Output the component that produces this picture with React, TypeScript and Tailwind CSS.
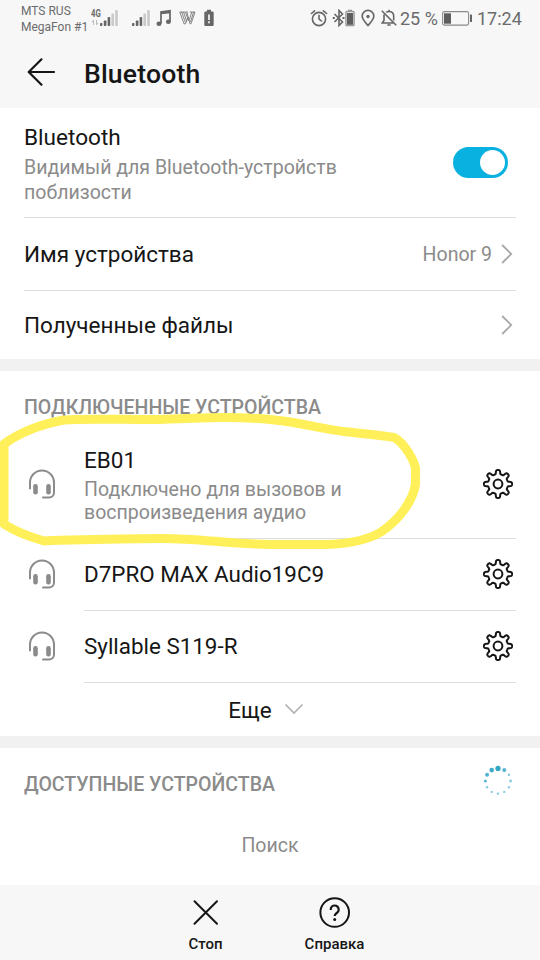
import React, { useState } from 'react';

const DEVICES = [
  { name: 'D7PRO MAX Audio19C9' },
  { name: 'Syllable S119-R' },
];

// ---- Status bar icons ----
const Signal: React.FC = () => (
  <svg width="18" height="18" viewBox="0 0 18 18" className="shrink-0">
    <g fill="#666">
      <rect x="0" y="14" width="2.4" height="3" rx="0.8" />
      <rect x="3.8" y="11.5" width="2.6" height="5.5" rx="0.8" />
      <rect x="7.6" y="8" width="2.6" height="9" rx="0.8" />
    </g>
    <g fill="#c9c9c9">
      <rect x="11.4" y="4.5" width="2.6" height="12.5" rx="0.8" />
      <rect x="15.2" y="1" width="2.6" height="16" rx="0.8" />
    </g>
  </svg>
);

const StatusBar: React.FC = () => (
  <div className="h-[38px] flex items-start text-[#6b6b6b]">
    <div className="w-[70px] ml-[21px] mt-[3px] text-[12px] leading-4 whitespace-nowrap">
      <div>MTS RUS</div>
      <div>MegaFon #1</div>
    </div>
    <div className="w-[9px] mt-[9px] text-[10px] leading-[9px] font-bold">
      <div className="origin-left scale-x-[0.78]">4G</div>
      <svg width="8" height="7" viewBox="0 0 8 7" fill="none" stroke="#b9b9b9" strokeWidth="1" className="mt-px">
        <path d="M2.5 6V1.2L.8 3M5.5 1v4.8L7.2 4" />
      </svg>
    </div>
    <div className="mt-[9px]"><Signal /></div>
    <div className="mt-[9px] ml-[14px]"><Signal /></div>
    <svg width="16" height="18" viewBox="0 0 16 18" className="mt-[9px] ml-[6px]" fill="none" stroke="#666" strokeWidth="1.7">
      <path d="M5 14.5V3L14 1.8V12.5M5 4.500 14 3.300" />
      <ellipse cx="3" cy="14.8" rx="2.5" ry="2.2" fill="#666" stroke="none" />
      <ellipse cx="12.4" cy="12.8" rx="2.5" ry="2.2" fill="#666" stroke="none" />
    </svg>
    <svg width="17" height="14" viewBox="0 0 17 14" className="mt-[11px] ml-[7px]" fill="none" stroke="#777" strokeWidth="0.9">
      <path d="M.8 1h5.6l3.2 8.800M.8 1 5 12.8h1.5L9 6.5M2.7 1l3.7 10.5M4.5 1l3.2 9M8 1.5l3 11.3h1L16 1h-5.2M7 1h2M14.600 1l-3.100 10M12.800 1l-2.500 8" />
    </svg>
    <svg width="10" height="18" viewBox="0 0 10 18" className="mt-[9px] ml-[8px]">
      <path d="M3 .8h4v1.7h1.5A1.2 1.2 0 0 1 9.7 3.7v12.1A1.2 1.2 0 0 1 8.5 17h-7A1.2 1.2 0 0 1 .3 15.8V3.7A1.2 1.2 0 0 1 1.5 2.5H3Z" fill="#666" />
      <path d="M5 5.5v5.5M5 12.3v2" stroke="#f7f7f7" strokeWidth="1.7" />
    </svg>

    <svg width="18" height="18" viewBox="0 0 18 18" className="mt-[9px] ml-[96px]" fill="none" stroke="#666" strokeWidth="1.6" strokeLinecap="round">
      <circle cx="9" cy="10" r="6.6" />
      <path d="M9 6.3V10l2.5 2M1.4 4.5 4.6 1.8M16.6 4.5l-3.2-2.7" />
    </svg>
    <svg width="13" height="18" viewBox="0 0 13 18" className="mt-[9px] ml-[4px]" fill="none" stroke="#666" strokeWidth="1.6">
      <path d="m2.5 5 8 8L7 16.5v-15L10.5 5l-8 8" />
      <path d="M.8 9h2M10.5 9h2" strokeWidth="2" />
    </svg>
    <svg width="10" height="18" viewBox="0 0 10 18" className="mt-[9px]">
      <path d="M3 .7h4v1.5H3Z" fill="#999" />
      <rect x=".9" y="2.3" width="8.2" height="14.5" rx="1" fill="#ddd" stroke="#888" strokeWidth="1.1" />
      <rect x="2" y="4" width="6" height="11.8" fill="#5e5e5e" />
    </svg>
    <svg width="14" height="18" viewBox="0 0 14 18" className="mt-[9px] ml-[6px]" fill="none" stroke="#666" strokeWidth="1.6">
      <path d="M7 16.5C4 13 1.2 10.3 1.2 7.2a5.8 5.8 0 0 1 11.600 0C12.8 10.3 10 13 7 16.5Z" />
      <circle cx="7" cy="7.5" r="1.7" fill="#666" stroke="none" />
    </svg>
    <svg width="16" height="18" viewBox="0 0 16 18" className="mt-[9px] ml-[6px]" fill="none" stroke="#666" strokeWidth="1.6">
      <path d="m.8 1.8 14.4 14.4M3 5.5v6L1.200 14h11M5.3 3.4C6 2.8 7 2.5 8 2.5c3 0 4.7 2 4.7 4.7v4.2M8 .8v1.7M6.3 16h3.4" />
    </svg>
    <div className="ml-[3px] mt-[8px] w-[42px] text-[18px] leading-[22px] whitespace-nowrap">25 %</div>
    <svg width="31" height="18" viewBox="0 0 31 18" className="mt-[9px]">
      <rect x=".6" y="2.6" width="26" height="13.5" rx="1.8" fill="none" stroke="#8a8a8a" strokeWidth="1.1" />
      <rect x="2" y="4.3" width="7" height="10.4" fill="#5e5e5e" />
      <rect x="28" y="5.5" width="2" height="7.5" rx=".5" fill="#666" />
    </svg>
    <div className="ml-[4px] mt-[8px] text-[18px] leading-[22px]">17:24</div>
  </div>
);

// ---- Page icons ----
const gearPath = Array.from({ length: 240 }, (_, i) => {
  const a = (i * 2 * Math.PI) / 240;
  const r = 12 + 2.1 * Math.tanh(2.4 * Math.cos(8 * a) - 0.35);
  return `${i ? 'L' : 'M'}${(16 + r * Math.cos(a)).toFixed(2)} ${(16 + r * Math.sin(a)).toFixed(2)}`;
}).join('') + 'Z';

const Gear: React.FC = () => (
  <svg width="32" height="32" viewBox="0 0 32 32" fill="none" stroke="#161616" strokeWidth="2" strokeLinejoin="round" className="shrink-0 mr-[2px] mb-px">
    <path d={gearPath} />
    <circle cx="16" cy="16" r="4.4" />
  </svg>
);

const Headset: React.FC = () => (
  <svg width="36" height="36" viewBox="0 0 36 36" fill="none" stroke="#8b8b8b" strokeWidth="2" strokeLinecap="round" className="shrink-0 -mt-[2px]">
    <path d="M6 22.5V16.5a12 12 0 0 1 24 0V26.5a5 5 0 0 1-5 5H19" />
    <g fill="#8b8b8b" stroke="none">
      <rect x="9.2" y="18" width="4.6" height="10.5" rx="2.2" />
      <rect x="22.2" y="18" width="4.6" height="10.5" rx="2.2" />
    </g>
  </svg>
);

const Chevron: React.FC = () => (
  <svg width="12" height="20" viewBox="0 0 12 20" fill="none" stroke="#a9a9a9" strokeWidth="1.8" className="shrink-0">
    <path d="m1.2 1 9 9-9 9" />
  </svg>
);

const DOT_SIZES = [2.6, 2.1, 1.2, 1.4, 1.2, 1.2, 1.2, 1.2, 1.2, 1.5, 2, 2.3];
const DOT_OPACITY = [1, 0.8, 0.6, 0.6, 0.55, 0.55, 0.6, 0.55, 0.6, 0.8, 0.85, 0.95];

const Spinner: React.FC = () => (
  <svg width="32" height="32" viewBox="0 0 32 32" fill="#35a5c6">
    {DOT_SIZES.map((r, i) => {
      const a = (i * Math.PI) / 6;
      return <circle key={i} cx={16 + 12.6 * Math.sin(a)} cy={16 - 12.6 * Math.cos(a)} r={r} opacity={DOT_OPACITY[i]} />;
    })}
  </svg>
);

export default function App() {
  const [enabled, setEnabled] = useState(true);

  return (
    <div className="relative w-[540px] h-[960px] flex flex-col overflow-hidden bg-white text-[#161616] font-[Roboto,'Noto_Sans',sans-serif]">
      {/* Header */}
      <div className="h-[108px] bg-[#f7f7f7] shrink-0">
        <StatusBar />
        <div className="h-[70px] flex items-center pl-[26px]">
          <svg width="30" height="30" viewBox="0 0 30 30" fill="none" stroke="#161616" strokeWidth="2.2" strokeLinecap="round" strokeLinejoin="round" className="-mt-[2px]">
            <path d="M28 15H3M15.5 2.3 2.7 15l12.8 12.7" />
          </svg>
          <h1 className="ml-[28px] pt-[2px] text-[26.6px] leading-8 font-medium tracking-[0.15px]">Bluetooth</h1>
        </div>
      </div>

      {/* Bluetooth settings */}
      <div className="px-6 shrink-0">
        <div className="h-[110px] pt-[14px] flex justify-between border-b border-[#dedede]">
          <div>
            <div className="text-[22.6px] leading-8">Bluetooth</div>
            <div className="w-[340px] pt-px text-[19.55px] leading-[25px] text-[#8b8b8b]">Видимый для Bluetooth-устройств поблизости</div>
          </div>
          <button
            onClick={() => setEnabled(!enabled)}
            className={`w-[55px] h-[31px] mt-[25px] mr-2 p-[3px] rounded-full flex ${enabled ? 'bg-[#08b1df] justify-end' : 'bg-gray-400 justify-start'}`}
          >
            <span className="size-[25px] rounded-full bg-white" />
          </button>
        </div>
        <div className="h-[73px] flex items-center border-b border-[#dedede]">
          <span className="flex-1 pt-[2px] text-[22.5px]">Имя устройства</span>
          <span className="text-[19.55px] text-[#8b8b8b] mr-[9px] pt-[2px]">Honor 9</span>
          <div className="mr-[3px]"><Chevron /></div>
        </div>
        <div className="h-[68px] flex items-center">
          <span className="flex-1 pt-[2px] text-[22.5px]">Полученные файлы</span>
          <div className="mr-[3px]"><Chevron /></div>
        </div>
      </div>
      <div className="h-3 bg-[#f1f1f1] shrink-0" />

      {/* Connected devices */}
      <div className="h-[365px] shrink-0 pl-6">
        <h2 className="h-[60px] pt-[25px] text-[19.55px] leading-6 font-medium text-[#8b8b8b]">ПОДКЛЮЧЕННЫЕ УСТРОЙСТВА</h2>
        <div className="h-[108px] flex items-center">
          <div className="w-[60px]"><Headset /></div>
          <div className="h-[108px] mr-6 flex-1 flex items-center justify-between border-b border-[#dedede]">
            <div className="pb-px">
              <div className="text-[22.5px] leading-[31px]">EB01</div>
              <div className="w-[290px] pt-[2px] text-[19.55px] leading-[23px] text-[#8b8b8b]">Подключено для вызовов и воспроизведения аудио</div>
            </div>
            <Gear />
          </div>
        </div>
        {DEVICES.map(device => (
          <div key={device.name} className="h-[72px] flex items-center">
            <div className="w-[60px]"><Headset /></div>
            <div className="h-[72px] mr-6 flex-1 flex items-center justify-between border-b border-[#dedede]">
              <span className="pt-px text-[22.4px]">{device.name}</span>
              <Gear />
            </div>
          </div>
        ))}
        <button className="w-full h-[53px] pr-[32px] pt-[3px] flex items-center justify-center text-[22.5px]">
          <span>Еще</span>
          <svg width="20" height="12" viewBox="0 0 20 12" fill="none" stroke="#b3b3b3" strokeWidth="1.7" className="ml-3 -mt-[5px]">
            <path d="m1.5 1.5 8.5 8.5 8.5-8.5" />
          </svg>
        </button>
      </div>
      <div className="h-3 bg-[#f1f1f1] shrink-0" />

      {/* Available devices */}
      <div className="flex-1">
        <div className="h-[66px] pl-6 pr-[26px] flex items-center justify-between">
          <h2 className="pt-[8px] text-[19.55px] leading-6 font-medium text-[#8b8b8b]">ДОСТУПНЫЕ УСТРОЙСТВА</h2>
          <Spinner />
        </div>
        <div className="mt-[20px] text-center text-[19.55px] leading-6 text-[#8b8b8b]">Поиск</div>
      </div>

      {/* Bottom actions */}
      <div className="h-[75px] shrink-0 bg-[#f7f7f7] flex justify-center pt-[12px] text-[15px] leading-5 font-medium">
        <button className="w-[129px] flex flex-col items-center">
          <svg width="32" height="32" viewBox="0 0 32 32" fill="none" stroke="#161616" strokeWidth="2" strokeLinecap="round">
            <path d="m4.500 4.300 22.500 22.500M27 4.300l-22.500 22.500" />
          </svg>
          <span className="mt-[5px]">Стоп</span>
        </button>
        <button className="w-[129px] flex flex-col items-center">
          <svg width="32" height="32" viewBox="0 0 32 32" fill="none" stroke="#161616" strokeWidth="2">
            <circle cx="15.7" cy="15.5" r="14.3" />
            <path d="M11.700 13c0-6 8-6 8 0 0 3-4 3-4 6" strokeWidth="2.2" />
            <circle cx="15.7" cy="22.5" r="1.5" fill="#161616" stroke="none" />
          </svg>
          <span className="mt-[5px]">Справка</span>
        </button>
      </div>

      {/* Marker stroke around the first device */}
      <svg width="540" height="960" viewBox="0 0 540 960" className="absolute inset-0 pointer-events-none" fill="none">
        <path
          d="M44 541C30 537 16 532 4 524V444C22 431 42 424 64 420C84 418 132 420 160 419.500C198 418 235 416 270 419.500C300 422 320 429 348 432C365 434 380 435 394 437.500C405 443 414 461 415.500 468V484C413 501 399 520 381 532C366 541 343 544 326 544.500H270C230 544 194 538 160 538.500C120 539 80 539 44 541Z"
          stroke="#fff05a"
          strokeWidth="9"
          strokeLinejoin="round"
        />
      </svg>
    </div>
  );
}
